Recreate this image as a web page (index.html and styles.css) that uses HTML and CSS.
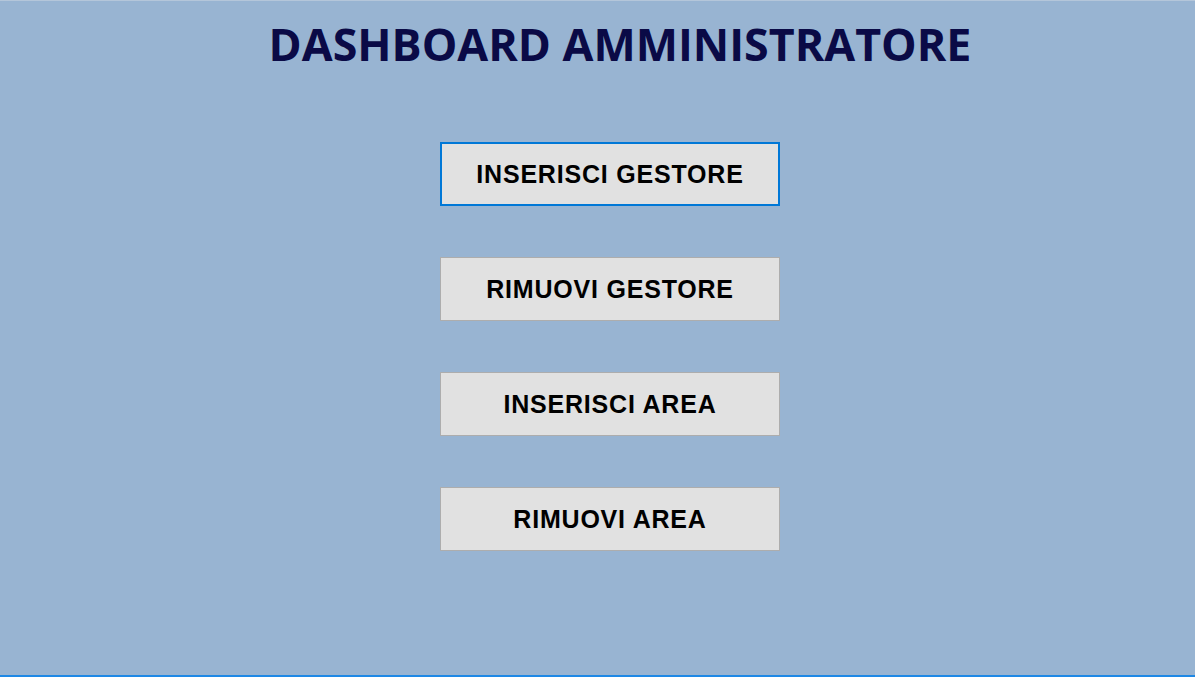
FILE: index.html
```html
<!DOCTYPE html>
<html lang="it">
<head>
<meta charset="utf-8">
<title>Dashboard Amministratore</title>
<link rel="stylesheet" href="styles.css">
</head>
<body>
<div class="window">
  <h1 class="title">DASHBOARD AMMINISTRATORE</h1>
  <div class="actions">
    <button class="btn btn-focus">INSERISCI GESTORE</button>
    <button class="btn">RIMUOVI GESTORE</button>
    <button class="btn">INSERISCI AREA</button>
    <button class="btn">RIMUOVI AREA</button>
  </div>
</div>
</body>
</html>
```
FILE: styles.css
```css
html, body {
  margin: 0;
  padding: 0;
  width: 1195px;
  height: 677px;
  overflow: hidden;
}
body {
  background: #98b4d2;
}
.window {
  box-sizing: border-box;
  width: 1195px;
  height: 677px;
  padding-left: 25px;
  background: #98b4d2;
  border-top: 1px solid #b4c6da;
  border-bottom: 2px solid #1e88e5;
  display: flex;
  flex-direction: column;
  align-items: center;
}
.title {
  margin: 15px 0 0 20px;
  font-family: "Open Sans", sans-serif;
  font-weight: 700;
  font-size: 44.8px;
  line-height: 56px;
  color: #0a0a46;
  letter-spacing: 0;
}
.actions {
  margin-top: 70px;
  display: flex;
  flex-direction: column;
  gap: 51px;
}
.btn {
  box-sizing: border-box;
  width: 340px;
  height: 64px;
  background: #e1e1e1;
  border: 1px solid #adadad;
  font-family: "Liberation Sans", Arial, sans-serif;
  font-weight: 700;
  font-size: 25px;
  letter-spacing: 0.8px;
  color: #000;
  padding: 0;
}
.btn-focus {
  border: 2px solid #0078d7;
}
```
